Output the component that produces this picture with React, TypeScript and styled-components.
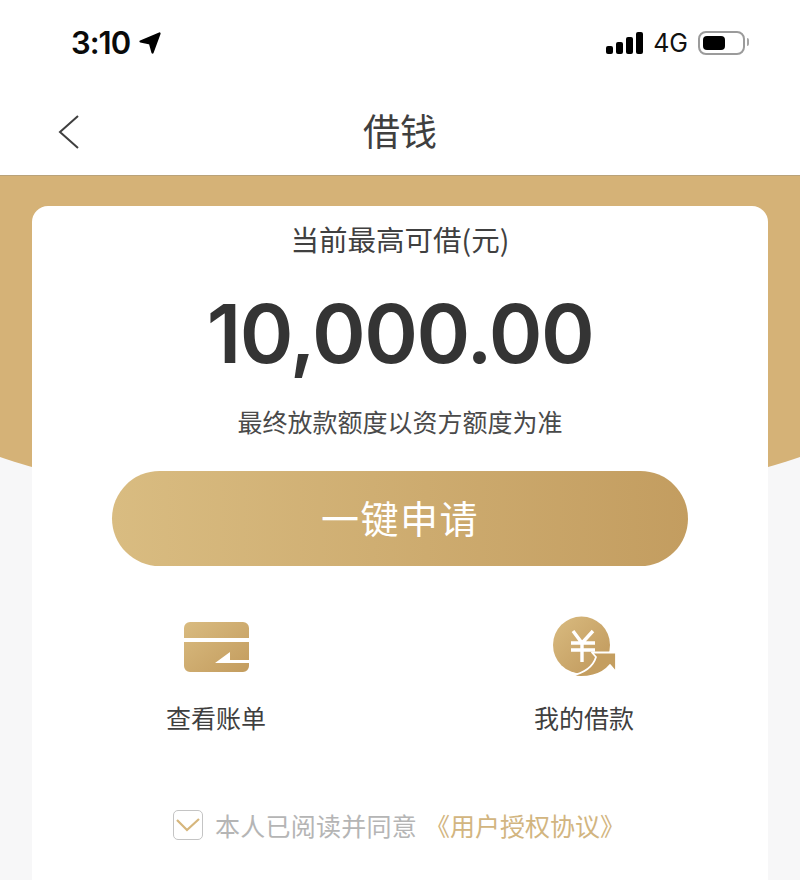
import styled, { createGlobalStyle } from 'styled-components';

const cjk = '"Noto Sans CJK SC", "Noto Sans", sans-serif';

const GlobalStyle = createGlobalStyle`
  html, body {
    margin: 0;
    padding: 0;
    background: #f7f7f8;
  }
  body {
    font-family: ${cjk};
  }
`;

const Page = styled.div`
  position: relative;
  width: 800px;
  height: 880px;
  overflow: hidden;
  background: #f7f7f8;
`;

const TopArea = styled.header`
  position: relative;
  background: #fff;
  border-bottom: 1px solid #b9a27a;
`;

const StatusBar = styled.div`
  height: 85px;
  padding: 0 55px 0 71px;
  display: flex;
  align-items: center;
  justify-content: space-between;
`;

const StatusGroup = styled.div<{ $gap: number }>`
  display: flex;
  align-items: center;
  gap: ${(p) => p.$gap}px;
`;

const Time = styled.span`
  font-family: Inter, sans-serif;
  font-size: 31px;
  font-weight: 600;
  letter-spacing: -1px;
  color: #0a0a0a;
`;

const Network = styled.span`
  font-family: Inter, sans-serif;
  font-size: 25px;
  font-weight: 400;
  color: #111;
`;

const Signal = styled.div`
  display: flex;
  align-items: flex-end;
  gap: 3px;
  height: 22px;
`;

const SignalBar = styled.i<{ $h: number }>`
  display: block;
  width: 7px;
  height: ${(p) => p.$h}px;
  border-radius: 2px;
  background: #000;
`;

const Battery = styled.div`
  position: relative;
  box-sizing: border-box;
  width: 47px;
  height: 24px;
  padding: 3px;
  border: 2px solid #9b9b9b;
  border-radius: 8px;

  &::before {
    content: '';
    display: block;
    width: 22px;
    height: 14px;
    border-radius: 4px;
    background: #000;
  }

  &::after {
    content: '';
    position: absolute;
    right: -6px;
    top: 5px;
    width: 2px;
    height: 8px;
    border-radius: 0 2px 2px 0;
    background: #a5a5a5;
  }
`;

const NavBar = styled.nav`
  height: 90px;
  position: relative;
  display: flex;
  align-items: center;
  justify-content: center;
`;

const BackButton = styled.div`
  position: absolute;
  left: 56px;
  top: 29px;
  display: flex;
`;

const Title = styled.h1`
  margin: 0;
  font-size: 37px;
  font-weight: 400;
  color: #3f3f3f;
`;

const Hero = styled.div`
  position: absolute;
  left: -100px;
  top: 176px;
  width: 1000px;
  height: 333px;
  background: #d5b277;
  border-radius: 0 0 500px 500px / 0 0 130px 130px;
`;

const Card = styled.main`
  position: relative;
  margin: 30px 32px 0;
  height: 720px;
  box-sizing: border-box;
  padding-top: 12px;
  background: #fff;
  border-radius: 16px;
  display: flex;
  flex-direction: column;
  align-items: center;
`;

const Label = styled.div`
  font-size: 28.5px;
  line-height: 42px;
  color: #404040;
`;

const Amount = styled.div`
  margin-top: 21px;
  font-family: Inter, sans-serif;
  font-size: 81.5px;
  line-height: 106px;
  font-weight: 600;
  letter-spacing: -1.5px;
  color: #343434;
`;

const Note = styled.div`
  margin-top: 16px;
  font-size: 25px;
  line-height: 36px;
  color: #4a4a4a;
`;

const ApplyButton = styled.button`
  margin-top: 32px;
  width: 576px;
  height: 95px;
  padding: 0 0 5px;
  border: 0;
  border-radius: 48px;
  background: linear-gradient(90deg, #d9bc81 0%, #c39d60 100%);
  font-family: ${cjk};
  font-size: 38px;
  letter-spacing: 1.5px;
  color: #fff;
`;

const Actions = styled.div`
  margin-top: 51px;
  width: 100%;
  display: grid;
  grid-template-columns: 1fr 1fr;
`;

const Action = styled.div`
  display: flex;
  flex-direction: column;
  align-items: center;
`;

const ActionIcon = styled.div`
  height: 60px;
  display: flex;
  align-items: center;
  justify-content: center;
`;

const ActionLabel = styled.span`
  margin-top: 22px;
  font-size: 25px;
  line-height: 36px;
  color: #3f3f3f;
`;

const Agreement = styled.div`
  margin-top: 72px;
  margin-left: -2px;
  display: flex;
  align-items: center;
`;

const CheckBox = styled.div`
  box-sizing: border-box;
  width: 30px;
  height: 30px;
  margin-right: 12px;
  border: 1.5px solid #c4c4c4;
  border-radius: 5px;
  display: flex;
  align-items: center;
  justify-content: center;
`;

const AgreementText = styled.span`
  font-size: 25px;
  line-height: 36px;
  letter-spacing: 0.25px;
  color: #b5b5b5;
`;

const AgreementLink = styled.span`
  margin-left: 8px;
  font-size: 25px;
  line-height: 36px;
  color: #d2b580;
`;

const App = () => {
  return (
    <Page>
      <GlobalStyle />
      <Hero />
      <TopArea>
        <StatusBar>
          <StatusGroup $gap={9}>
            <Time>3:10</Time>
            <svg width="22" height="22" viewBox="0 0 22 22">
              <path d="M20.5 1.5 L13.5 20.5 L11 11.5 L1.5 9.5 Z" fill="#000" stroke="#000" strokeWidth="2.2" strokeLinejoin="round" />
            </svg>
          </StatusGroup>
          <StatusGroup $gap={10}>
            <Signal>
              <SignalBar $h={8} />
              <SignalBar $h={12} />
              <SignalBar $h={17} />
              <SignalBar $h={22} />
            </Signal>
            <Network>4G</Network>
            <Battery />
          </StatusGroup>
        </StatusBar>
        <NavBar>
          <BackButton>
            <svg width="26" height="36" viewBox="0 0 26 36" fill="none">
              <path d="M22 2 L4 18 L22 34" stroke="#3f3f3f" strokeWidth="2" />
            </svg>
          </BackButton>
          <Title>借钱</Title>
        </NavBar>
      </TopArea>
      <Card>
        <Label>当前最高可借(元)</Label>
        <Amount>10,000.00</Amount>
        <Note>最终放款额度以资方额度为准</Note>
        <ApplyButton>一键申请</ApplyButton>
        <Actions>
          <Action>
            <ActionIcon>
              <svg width="65" height="50" viewBox="0 0 65 50">
                <defs>
                  <linearGradient id="billGold" x1="0" y1="0" x2="1" y2="1">
                    <stop offset="0" stopColor="#d9bb80" />
                    <stop offset="1" stopColor="#c39c5e" />
                  </linearGradient>
                </defs>
                <path
                  d="M6 0 H59 A6 6 0 0 1 65 6 V16 H0 V6 A6 6 0 0 1 6 0 Z M0 20 H65 V38 H46 V30 L31 41 H65 V44 A6 6 0 0 1 59 50 H6 A6 6 0 0 1 0 44 Z"
                  fill="url(#billGold)"
                />
              </svg>
            </ActionIcon>
            <ActionLabel>查看账单</ActionLabel>
          </Action>
          <Action>
            <ActionIcon>
              <svg width="68" height="64" viewBox="0 0 68 64">
                <defs>
                  <linearGradient id="loanGold" x1="0" y1="0" x2="1" y2="1">
                    <stop offset="0" stopColor="#d9bb80" />
                    <stop offset="1" stopColor="#bf975a" />
                  </linearGradient>
                </defs>
                <circle cx="31.5" cy="30" r="28.5" fill="url(#loanGold)" />
                <path
                  d="M21 61 C34 58 43 52 46 42 L42 37.5 H66 V57 L60 50 C52 60 36 64 21 61 Z"
                  fill="#c49e60"
                  stroke="#fff"
                  strokeWidth="1.8"
                  strokeLinejoin="round"
                />
                <path
                  d="M23 16 L32 28 L43 16 M21 28 H45 M21 35 H45 M32 28 V47"
                  fill="none"
                  stroke="#fff"
                  strokeWidth="3.4"
                />
              </svg>
            </ActionIcon>
            <ActionLabel>我的借款</ActionLabel>
          </Action>
        </Actions>
        <Agreement>
          <CheckBox>
            <svg width="24" height="16" viewBox="0 0 24 16" fill="none">
              <path d="M1 3 L11 13 L23 2" stroke="#d6b67c" strokeWidth="2.2" />
            </svg>
          </CheckBox>
          <AgreementText>本人已阅读并同意</AgreementText>
          <AgreementLink>《用户授权协议》</AgreementLink>
        </Agreement>
      </Card>
    </Page>
  );
};

export default App;
